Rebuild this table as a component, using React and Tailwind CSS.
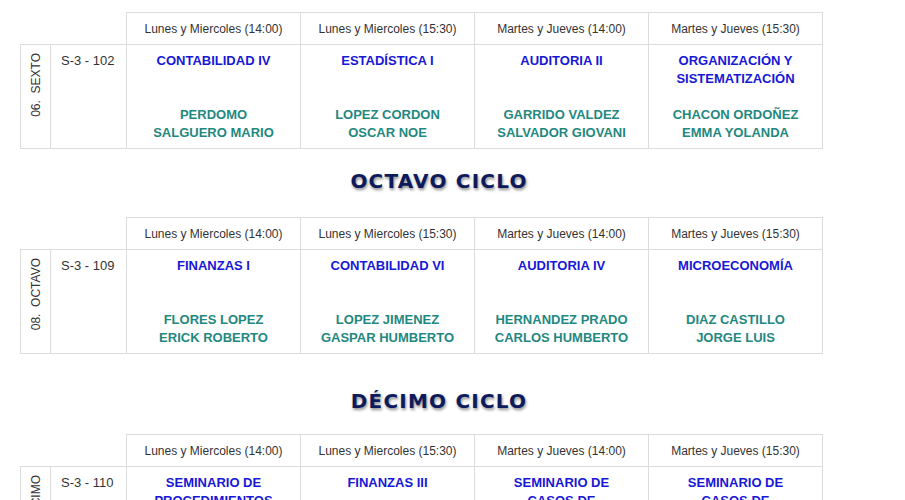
import React from "react";

const slots = [
  "Lunes y Miercoles (14:00)",
  "Lunes y Miercoles (15:30)",
  "Martes y Jueves (14:00)",
  "Martes y Jueves (15:30)",
];

const ciclos = [
  {
    title: null,
    label: "06.\u00a0 SEXTO",
    room: "S-3 - 102",
    courses: [
      { name: ["CONTABILIDAD IV"], teacher: ["PERDOMO", "SALGUERO MARIO"] },
      { name: ["ESTADÍSTICA I"], teacher: ["LOPEZ CORDON", "OSCAR NOE"] },
      { name: ["AUDITORIA II"], teacher: ["GARRIDO VALDEZ", "SALVADOR GIOVANI"] },
      {
        name: ["ORGANIZACIÓN Y", "SISTEMATIZACIÓN"],
        teacher: ["CHACON ORDOÑEZ", "EMMA YOLANDA"],
      },
    ],
  },
  {
    title: "OCTAVO CICLO",
    label: "08.\u00a0 OCTAVO",
    room: "S-3 - 109",
    courses: [
      { name: ["FINANZAS I"], teacher: ["FLORES LOPEZ", "ERICK ROBERTO"] },
      { name: ["CONTABILIDAD VI"], teacher: ["LOPEZ JIMENEZ", "GASPAR HUMBERTO"] },
      { name: ["AUDITORIA IV"], teacher: ["HERNANDEZ PRADO", "CARLOS HUMBERTO"] },
      { name: ["MICROECONOMÍA"], teacher: ["DIAZ CASTILLO", "JORGE LUIS"] },
    ],
  },
  {
    title: "DÉCIMO CICLO",
    label: "10.\u00a0 DÉCIMO",
    room: "S-3 - 110",
    courses: [
      {
        name: ["SEMINARIO DE", "PROCEDIMIENTOS", "CONTABLES"],
        teacher: ["MORALES PEREZ", "JUAN CARLOS"],
      },
      { name: ["FINANZAS III"], teacher: ["RAMIREZ SOTO", "ANA LUCIA"] },
      {
        name: ["SEMINARIO DE", "CASOS DE", "AUDITORIA"],
        teacher: ["GARCIA LOPEZ", "MARIO ANTONIO"],
      },
      {
        name: ["SEMINARIO DE", "CASOS DE", "FINANZAS"],
        teacher: ["CRUZ MENDEZ", "LUIS FERNANDO"],
      },
    ],
  },
];

function Horario({ ciclo }) {
  return (
    <table className="ml-[20px] table-fixed border-collapse w-[802px]">
      <colgroup>
        <col className="w-[30px]" />
        <col className="w-[76px]" />
        <col className="w-[174px]" />
        <col className="w-[174px]" />
        <col className="w-[174px]" />
        <col className="w-[174px]" />
      </colgroup>
      <thead>
        <tr>
          <th className="p-0" />
          <th className="p-0" />
          {slots.map((s) => (
            <th
              key={s}
              className="h-[32px] border border-[#dcdcdc] p-0 text-center text-[12px] font-normal text-[#333]"
            >
              {s}
            </th>
          ))}
        </tr>
      </thead>
      <tbody>
        <tr>
          <td className="border border-[#dcdcdc] p-0 pt-[8px] align-top text-center">
            <span className="inline-block rotate-180 text-[12px] leading-[14px] text-[#333] [writing-mode:vertical-rl]">
              {ciclo.label}
            </span>
          </td>
          <td className="border border-[#dcdcdc] px-[10px] pt-[7px] pb-[6px] align-top text-[13px] leading-[18px] text-[#333]">
            {ciclo.room}
          </td>
          {ciclo.courses.map((c, i) => (
            <td
              key={i}
              className="border border-[#dcdcdc] px-1 pt-[7px] pb-[6px] align-top text-center text-[13px] font-bold leading-[18px]"
            >
              <div className="flex h-[90px] flex-col justify-between">
                <div className="text-[#1717d6]">
                  {c.name.map((n) => (
                    <div key={n}>{n}</div>
                  ))}
                </div>
                <div className="text-[#1f8880]">
                  {c.teacher.map((t) => (
                    <div key={t}>{t}</div>
                  ))}
                </div>
              </div>
            </td>
          ))}
        </tr>
      </tbody>
    </table>
  );
}

export default function App() {
  return (
    <div className="min-h-screen bg-white pt-[12px] font-['Liberation_Sans',Arial,sans-serif]">
      <Horario ciclo={ciclos[0]} />

      <h2 className="mt-[20px] mb-[24px] w-[878px] text-center font-['DejaVu_Sans',sans-serif] text-[20px] font-bold leading-[24px] tracking-[1.2px] text-[#0d1a5c] [text-shadow:1px_2px_3px_rgba(0,0,0,0.45)]">
        {ciclos[1].title}
      </h2>
      <Horario ciclo={ciclos[1]} />

      <h2 className="mt-[35px] mb-[21px] w-[878px] text-center font-['DejaVu_Sans',sans-serif] text-[20px] font-bold leading-[24px] tracking-[1.2px] text-[#0d1a5c] [text-shadow:1px_2px_3px_rgba(0,0,0,0.45)]">
        {ciclos[2].title}
      </h2>
      <Horario ciclo={ciclos[2]} />
    </div>
  );
}
